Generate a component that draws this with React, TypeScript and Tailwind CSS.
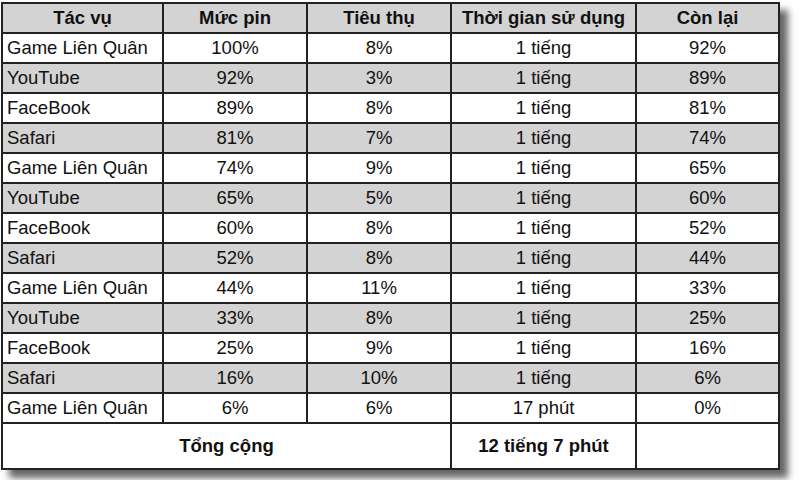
const rows: [string, string, string, string, string][] = [
  ['Game Liên Quân', '100%', '8%', '1 tiếng', '92%'],
  ['YouTube', '92%', '3%', '1 tiếng', '89%'],
  ['FaceBook', '89%', '8%', '1 tiếng', '81%'],
  ['Safari', '81%', '7%', '1 tiếng', '74%'],
  ['Game Liên Quân', '74%', '9%', '1 tiếng', '65%'],
  ['YouTube', '65%', '5%', '1 tiếng', '60%'],
  ['FaceBook', '60%', '8%', '1 tiếng', '52%'],
  ['Safari', '52%', '8%', '1 tiếng', '44%'],
  ['Game Liên Quân', '44%', '11%', '1 tiếng', '33%'],
  ['YouTube', '33%', '8%', '1 tiếng', '25%'],
  ['FaceBook', '25%', '9%', '1 tiếng', '16%'],
  ['Safari', '16%', '10%', '1 tiếng', '6%'],
  ['Game Liên Quân', '6%', '6%', '17 phút', '0%'],
]

const cell = 'border-2 border-[#222] p-0'

export default function App() {
  return (
    <div className="w-[800px] h-[480px] bg-white pt-[2px] pl-px font-['Liberation_Sans',Arial,sans-serif] text-[18.5px] text-[#111] overflow-hidden">
      <table className="table-fixed border-collapse w-[777px] shadow-[8px_8px_7px_rgba(0,0,0,0.6)]">
        <colgroup>
          <col className="w-[161px]" />
          <col className="w-[144px]" />
          <col className="w-[144px]" />
          <col className="w-[185px]" />
          <col className="w-[143px]" />
        </colgroup>
        <thead>
          <tr className="h-[30px] bg-[#d3d3d3] font-bold">
            <th className={cell}>Tác vụ</th>
            <th className={cell}>Mức pin</th>
            <th className={cell}>Tiêu thụ</th>
            <th className={cell}>Thời gian sử dụng</th>
            <th className={cell}>Còn lại</th>
          </tr>
        </thead>
        <tbody>
          {rows.map((r, i) => (
            <tr key={i} className={i % 2 === 1 ? 'h-[30px] bg-[#d3d3d3]' : 'h-[30px] bg-white'}>
              <td className={cell + ' pl-[4px] text-left'}>{r[0]}</td>
              <td className={cell + ' text-center'}>{r[1]}</td>
              <td className={cell + ' text-center'}>{r[2]}</td>
              <td className={cell + ' text-center'}>{r[3]}</td>
              <td className={cell + ' text-center'}>{r[4]}</td>
            </tr>
          ))}
          <tr className="h-[46px] bg-white font-bold">
            <td colSpan={3} className={cell + ' text-center'}>Tổng cộng</td>
            <td className={cell + ' text-center'}>12 tiếng 7 phút</td>
            <td className={cell}></td>
          </tr>
        </tbody>
      </table>
    </div>
  )
}
